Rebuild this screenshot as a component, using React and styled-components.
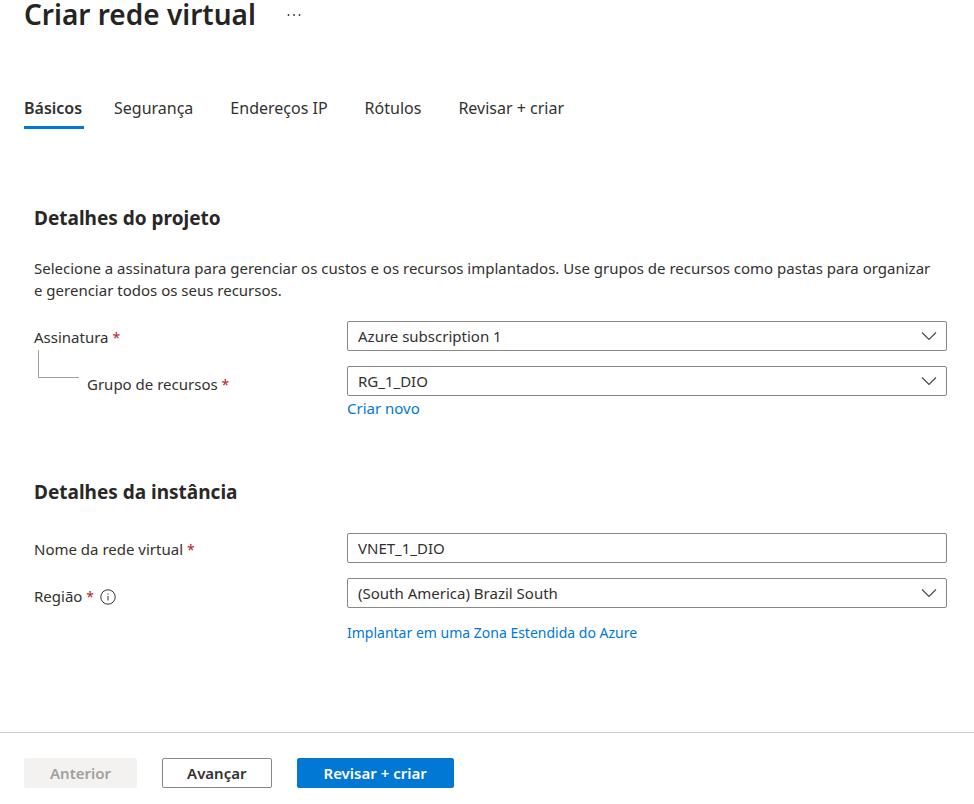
import React from "react";
import styled, { createGlobalStyle } from "styled-components";

const Global = createGlobalStyle`
  * { box-sizing: border-box; }
  body {
    margin: 0;
    background: #fff;
    color: #323130;
    font-family: "Segoe UI", "Noto Sans", "Open Sans", sans-serif;
    font-size: 15px;
    line-height: 22px;
  }
  h1, h2, p { margin: 0; }
  button, input, select { font: inherit; color: inherit; }
`;

const Header = styled.header`
  display: flex;
  align-items: center;
  gap: 30px;
  height: 28px;
  padding: 0 24px;
`;

const Title = styled.h1`
  font-size: 28px;
  line-height: 28px;
  font-weight: 600;
  color: #252423;
`;

const MoreButton = styled.button`
  display: flex;
  padding: 2px 0 0;
  border: 0;
  background: none;
`;

const Tabs = styled.nav`
  display: flex;
  gap: 30px;
  margin-top: 64px;
  padding: 0 24px;
`;

const Tab = styled.button`
  min-width: 60px;
  height: 37px;
  padding: 0 ${(p) => (p.$active ? 0 : 7)}px 3px 0;
  border: 0;
  border-bottom: 3px solid ${(p) => (p.$active ? "#0078d4" : "transparent")};
  background: none;
  font-size: 16px;
  font-weight: ${(p) => (p.$active ? 600 : 400)};
  text-align: left;
  white-space: nowrap;
`;

const Main = styled.main`
  padding: 76px 27px 0 34px;
`;

const Section = styled.section`
  & + & { margin-top: 60px; }
`;

const SectionTitle = styled.h2`
  font-size: 19px;
  line-height: 26px;
  font-weight: 700;
  color: #292827;
`;

const Intro = styled.p`
  margin-top: 26px;
  padding-right: 6px;
`;

const Fields = styled.div`
  display: grid;
  gap: 15px;
  margin-top: ${(p) => p.$top}px;
`;

const Field = styled.div`
  display: grid;
  grid-template-columns: 313px minmax(0, 1fr);
  align-items: start;
`;

const LabelCell = styled.div`
  display: flex;
  align-items: flex-start;
  gap: 6px;
  padding-top: ${(p) => (p.$low ? 7 : 5)}px;
`;

const Label = styled.label`
  white-space: nowrap;
`;

const Required = styled.span`
  color: #b5202e;
  font-size: 14px;
`;

const Elbow = styled.span`
  width: 41px;
  height: 28px;
  margin: -23px 2px 0 4px;
  border-left: 1px solid #a19f9d;
  border-bottom: 1px solid #a19f9d;
`;

const InfoButton = styled.button`
  display: flex;
  padding: 4px 0 0;
  border: 0;
  background: none;
`;

const SelectBox = styled.div`
  display: grid;
  align-items: center;
  & > * { grid-area: 1 / 1; }
  & > svg { justify-self: end; margin-right: 10px; pointer-events: none; }
`;

const Select = styled.select`
  appearance: none;
  width: 100%;
  height: 30px;
  padding: 0 34px 0 10px;
  border: 1px solid #8a8886;
  border-radius: 2px;
  background: #fff;
`;

const Input = styled.input`
  width: 100%;
  height: 30px;
  padding: 0 10px;
  border: 1px solid #8a8886;
  border-radius: 2px;
  background: #fff;
`;

const Link = styled.a`
  display: block;
  width: fit-content;
  margin-top: ${(p) => (p.$spaced ? 14 : 1)}px;
  color: #0078d4;
  font-size: ${(p) => (p.$spaced ? 14 : 15)}px;
  text-decoration: none;
`;

const Footer = styled.footer`
  display: flex;
  gap: 25px;
  margin-top: 88px;
  padding: 25px 24px 16px;
  border-top: 1px solid #d2d0ce;
`;

const Action = styled.button`
  height: 30px;
  padding: 0 ${(p) => p.$pad}px;
  border: 1px solid ${(p) => p.$border};
  border-radius: 2px;
  background: ${(p) => p.$bg};
  color: ${(p) => p.$fg};
  font-weight: 600;
  white-space: nowrap;
`;

const Chevron = () => (
  <svg width="16" height="10" viewBox="0 0 16 10" fill="none" stroke="#484644" strokeWidth="1.1" aria-hidden="true">
    <path d="M1 1.5l7 7 7-7" />
  </svg>
);

function Dropdown({ id, value }) {
  return (
    <SelectBox>
      <Select id={id} defaultValue={value}>
        <option>{value}</option>
      </Select>
      <Chevron />
    </SelectBox>
  );
}

function FieldLabel({ id, children }) {
  return (
    <Label htmlFor={id}>
      {children} <Required>*</Required>
    </Label>
  );
}

const tabs = ["Básicos", "Segurança", "Endereços IP", "Rótulos", "Revisar + criar"];

export default function App() {
  return (
    <>
      <Global />
      <Header>
        <Title>Criar rede virtual</Title>
        <MoreButton aria-label="Mais">
          <svg width="16" height="4" viewBox="0 0 16 4" fill="#323130">
            <circle cx="2.5" cy="2" r="0.9" />
            <circle cx="8" cy="2" r="0.9" />
            <circle cx="13.5" cy="2" r="0.9" />
          </svg>
        </MoreButton>
      </Header>
      <Tabs>
        {tabs.map((t, i) => (
          <Tab key={t} $active={i === 0}>{t}</Tab>
        ))}
      </Tabs>
      <Main>
        <Section>
          <SectionTitle>Detalhes do projeto</SectionTitle>
          <Intro>
            Selecione a assinatura para gerenciar os custos e os recursos implantados. Use grupos de recursos como pastas para organizar e gerenciar todos os seus recursos.
          </Intro>
          <Fields $top={20}>
            <Field>
              <LabelCell><FieldLabel id="sub">Assinatura</FieldLabel></LabelCell>
              <Dropdown id="sub" value="Azure subscription 1" />
            </Field>
            <Field>
              <LabelCell $low>
                <Elbow />
                <FieldLabel id="group">Grupo de recursos</FieldLabel>
              </LabelCell>
              <div>
                <Dropdown id="group" value="RG_1_DIO" />
                <Link href="#novo">Criar novo</Link>
              </div>
            </Field>
          </Fields>
        </Section>
        <Section>
          <SectionTitle>Detalhes da instância</SectionTitle>
          <Fields $top={28}>
            <Field>
              <LabelCell><FieldLabel id="name">Nome da rede virtual</FieldLabel></LabelCell>
              <Input id="name" defaultValue="VNET_1_DIO" />
            </Field>
            <Field>
              <LabelCell $low>
                <FieldLabel id="region">Região</FieldLabel>
                <InfoButton aria-label="Informações">
                  <svg width="16" height="16" viewBox="0 0 16 16" fill="none" stroke="#323130">
                    <circle cx="8" cy="8" r="7.2" />
                    <path d="M8 7v4.5M8 4.5v1.2" />
                  </svg>
                </InfoButton>
              </LabelCell>
              <div>
                <Dropdown id="region" value="(South America) Brazil South" />
                <Link href="#zona" $spaced>Implantar em uma Zona Estendida do Azure</Link>
              </div>
            </Field>
          </Fields>
        </Section>
      </Main>
      <Footer>
        <Action disabled $pad={25} $bg="#f3f2f1" $border="#f3f2f1" $fg="#a19f9d">Anterior</Action>
        <Action $pad={24} $bg="#fff" $border="#8a8886" $fg="#323130">Avançar</Action>
        <Action $pad={26} $bg="#0078d4" $border="#0078d4" $fg="#fff">Revisar + criar</Action>
      </Footer>
    </>
  );
}
